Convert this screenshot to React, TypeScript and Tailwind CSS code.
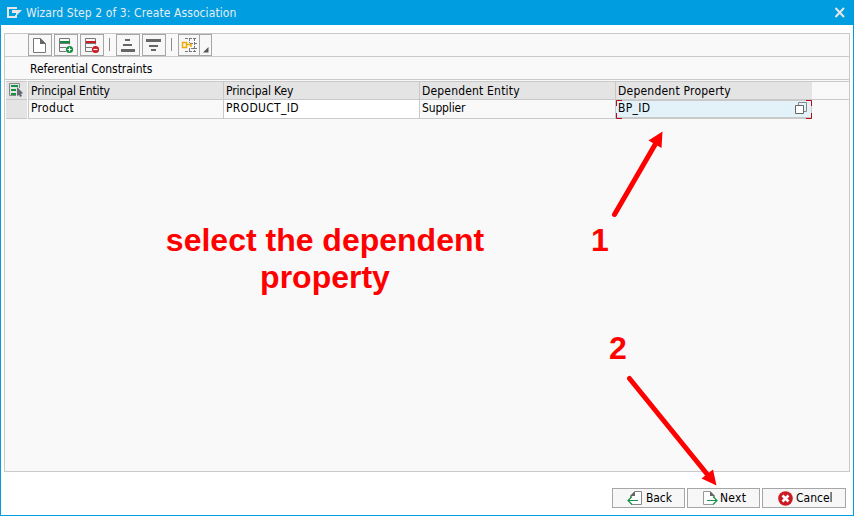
import type { ReactNode } from "react";

function ToolButton({ children, wide = "w-6" }: { children: ReactNode; wide?: string }) {
  return (
    <div className={`${wide} flex h-[22px] items-center justify-center border border-[#a6a6a6] bg-[#f7f7f7]`}>
      {children}
    </div>
  );
}

function Separator() {
  return <div className="h-[13px] w-px bg-[#8c8c8c]" />;
}

function NewIcon() {
  return (
    <svg width="22" height="20" viewBox="0 0 22 20" fill="none">
      <path d="M4.5 3.5H11.5L16.5 8.5V17.5H4.5Z" fill="#fff" stroke="#777" />
      <path d="M11 3V9H17Z" fill="#666" />
    </svg>
  );
}

function RowIcon({ color, minus = false }: { color: string; minus?: boolean }) {
  return (
    <svg width="22" height="20" viewBox="0 0 22 20" fill="none">
      <path d="M14.5 9.5V3.5H4.5V16.5H11M5 8.5H14M5 12.5H11" stroke="#777" />
      <path d="M5 6H15V8H5Z" fill={color} />
      <circle cx="14.5" cy="14.5" r="3.6" fill={color} />
      <path d={minus ? "M12.5 14.5H16.5" : "M12.5 14.5H16.5M14.5 12.5V16.5"} stroke="#fff" strokeWidth="1.2" />
    </svg>
  );
}

function HeaderCell({ w, tracking, children }: { w: string; tracking: string; children: ReactNode }) {
  return (
    <div className={`${w} ${tracking} h-[17px] border-l border-[#c9c9c9] bg-[#e4e4e4] pl-[2px] leading-[18px]`}>{children}</div>
  );
}

function PageIcon({ next = false }: { next?: boolean }) {
  return next ? (
    <svg width="16" height="16" viewBox="0 0 16 16" fill="none">
      <path d="M11.5 14.5H1.5V1.5H8L12.5 6V8" fill="#fff" stroke="#999" />
      <path d="M8 1V6H13Z" fill="#666" />
      <path d="M5 10.5H15M11 6.5L15 10.5L11 14.5" stroke="#159447" strokeWidth="1.2" />
    </svg>
  ) : (
    <svg width="16" height="16" viewBox="0 0 16 16" fill="none">
      <path d="M4 14.5H14.5V1.5H8L3.5 6V8" fill="#fff" stroke="#888" />
      <path d="M8 1V6H3Z" fill="#666" />
      <path d="M11 10.5H1M5 6.5L1 10.5L5 14.5" stroke="#159447" strokeWidth="1.2" />
    </svg>
  );
}

export default function App() {
  return (
    <div className="relative flex h-[516px] w-[854px] flex-col border border-t-0 border-[#009de0] bg-white font-['DejaVu_Sans_Condensed','DejaVu_Sans',sans-serif] text-[12px] text-black">
      <header className="flex h-[25px] shrink-0 items-center bg-[#009de0] pl-[6px] pr-[7px] text-[#e4eef3]">
        <svg width="15" height="12" viewBox="0 0 15 12" className="shrink-0">
          <path d="M0 0H10V2H2V9H8V8H10V11H0Z" fill="#e6e6e6" />
          <path d="M5 3H15L9 9V6H5Z" fill="#e6e6e6" />
        </svg>
        <span className="ml-1 whitespace-nowrap leading-[16px] tracking-[0.09px]">
          Wizard Step 2 of 3: Create Association
        </span>
        <svg width="12" height="11" viewBox="0 0 12 11" className="ml-auto">
          <path d="M1.5 1L10 10M10 1L1.5 10" stroke="#e6e6e6" strokeWidth="2" />
        </svg>
      </header>

      <main className="ml-[3px] mt-2 flex h-[439px] w-[846px] shrink-0 flex-col border border-[#c9c9c9] bg-[#f9f9f9]">
        <div className="flex h-[23px] shrink-0 items-start border-b border-[#c9c9c9] pl-[23px]">
          <ToolButton><NewIcon /></ToolButton>
          <div className="ml-[2px]"><ToolButton><RowIcon color="#138b3e" /></ToolButton></div>
          <div className="ml-[2px]"><ToolButton><RowIcon color="#cc1a22" minus /></ToolButton></div>
          <div className="ml-[5px] mt-1"><Separator /></div>
          <div className="ml-[6px]">
            <ToolButton>
              <svg width="22" height="20" viewBox="0 0 22 20" fill="#666">
                <path d="M8 4H13V6H8ZM6 9H15V11H6ZM4 14H18V17H4Z" />
              </svg>
            </ToolButton>
          </div>
          <div className="ml-[2px]">
            <ToolButton>
              <svg width="22" height="20" viewBox="0 0 22 20" fill="#666">
                <path d="M3 4H18V7H3ZM6 10H15V12H6ZM8 14H13V16H8Z" />
              </svg>
            </ToolButton>
          </div>
          <div className="ml-[5px] mt-1"><Separator /></div>
          <div className="ml-[6px] flex">
            <ToolButton wide="w-[22px]">
              <svg width="20" height="20" viewBox="0 0 20 20" fill="none">
                <path d="M6 3.5H18M11 8.5H18M12 13.5H18M6 16.5H18M10.5 3V8M15.5 3V17M10.5 13V17" stroke="#777" strokeDasharray="3 1" />
                <path d="M3.5 7.5H7.5V12.5H3.5ZM8 9.5H12V12" stroke="#f0ab00" strokeWidth="1.5" />
              </svg>
            </ToolButton>
            <div className="-ml-px">
              <ToolButton wide="w-[13px]">
                <svg width="11" height="20" viewBox="0 0 11 20">
                  <path d="M8.5 12V17.5H3Z" fill="#555" />
                </svg>
              </ToolButton>
            </div>
          </div>
        </div>

        <div className="h-[23px] shrink-0 border-b border-[#c9c9c9] pl-[25px] leading-[24px] tracking-[-0.06px]">Referential Constraints</div>

        <section className="ml-px mt-px flex shrink-0">
          <div className="flex h-[38px] w-[21px] shrink-0 flex-col border-y border-[#c9c9c9] bg-[#e4e4e4]">
            <div className="h-[18px] border-b border-[#c9c9c9] pl-[3px]">
              <svg width="16" height="16" viewBox="0 0 16 16" fill="none">
                <path d="M10.5 6V1.5H0.5V13.5H7" stroke="#888" />
                <path d="M2 3H9V5H2ZM2 7H7V9H2ZM2 11H7V13H2Z" fill="#139445" />
                <path d="M8 5L14 11L12 12L13 14L11 15L10 13L8 14Z" fill="#666b73" />
              </svg>
            </div>
          </div>
          <div className="ml-px flex grow flex-col border-t border-[#c9c9c9]">
            <div className="flex h-[18px] border-b border-[#c9c9c9]">
              <HeaderCell w="w-[195px]" tracking="tracking-[-0.13px]">Principal Entity</HeaderCell>
              <HeaderCell w="w-[196px]" tracking="tracking-[-0.13px]">Principal Key</HeaderCell>
              <HeaderCell w="w-[196px]" tracking="tracking-[0.18px]">Dependent Entity</HeaderCell>
              <HeaderCell w="w-[197px]" tracking="tracking-[0.22px]">Dependent Property</HeaderCell>
            </div>
            <div className="flex h-[19px] w-[784px] border-b border-[#c9c9c9] leading-[16px]">
              <div className="w-[195px] border-l border-[#c9c9c9] pl-[2px] tracking-[0.3px]">Product</div>
              <div className="w-[196px] border-l border-[#c9c9c9] bg-white pl-[2px] tracking-[0.3px]">PRODUCT_ID</div>
              <div className="w-[196px] border-l border-[#c9c9c9] pl-[2px] tracking-[-0.15px]">Supplier</div>
              <div className="relative flex w-[197px] justify-between border-b border-l border-r border-t border-[#c9c9c9] bg-[#e3f1f9] pl-[2px] pr-[2px] leading-[14px] tracking-[0.3px]">
                BP_ID
                <svg width="15" height="14" viewBox="0 0 15 14" fill="none" className="mt-px">
                  <path d="M4.5 3V0.5H12.5V9.5H10" stroke="#888" />
                  <path d="M1.5 3.5H9.5V11.5H1.5Z" fill="#fff" stroke="#666" />
                </svg>
                <svg width="196" height="19" viewBox="0 0 196 19" fill="none" className="absolute left-0 -top-px">
                  <path d="M6 0.5H0.5V6M0.5 13V18.5H6M190 0.5H195.5V6M195.5 13V18.5H190" stroke="#b10d19" />
                </svg>
              </div>
            </div>
          </div>
        </section>
      </main>

      <footer className="mt-4 flex justify-end gap-[2px] pr-[7px]">
        <button className="flex h-5 w-[73px] items-center border border-[#a6a6a6] bg-[#f7f7f7] pl-[14px]">
          <PageIcon /><span className="ml-[3px] leading-[16px] tracking-[-0.1px]">Back</span>
        </button>
        <button className="flex h-5 w-[73px] items-center border border-[#a6a6a6] bg-[#f7f7f7] pl-[14px]">
          <PageIcon next /><span className="ml-[2px] leading-[16px] tracking-[0.3px]">Next</span>
        </button>
        <button className="flex h-5 w-[84px] items-center border border-[#a6a6a6] bg-[#f7f7f7] pl-[15px]">
          <svg width="15" height="15" viewBox="0 0 15 15" fill="none">
            <circle cx="7.5" cy="7.5" r="7.3" fill="#cc1a22" />
            <path d="M4.5 4.5L10.5 10.5M10.5 4.5L4.5 10.5" stroke="#fff" strokeWidth="2.6" />
          </svg>
          <span className="ml-[3px] leading-[16px]">Cancel</span>
        </button>
      </footer>

      <div className="pointer-events-none absolute -left-px top-0 h-[516px] w-[854px] font-['Liberation_Sans',Arial,sans-serif] text-[32px] font-bold leading-[37px] text-[#ff0000]">
        <p className="absolute left-[155px] top-[222px] w-[340px] text-center">
          select the dependent
          <br />
          property
        </p>
        <span className="absolute left-[591px] top-[222px]">1</span>
        <span className="absolute left-[609px] top-[330px]">2</span>
        <svg width="854" height="516" viewBox="0 0 854 516" className="absolute left-0 top-0">
          <path d="M614.5 214.5L656 143M629.5 378.5L707 474" stroke="#f00" strokeWidth="5" strokeLinecap="round" />
          <path d="M662.5 131.5L648.5 140.5L661.5 148ZM716.5 485.5L701.5 478.5L713 469.5Z" fill="#f00" />
        </svg>
      </div>
    </div>
  );
}
